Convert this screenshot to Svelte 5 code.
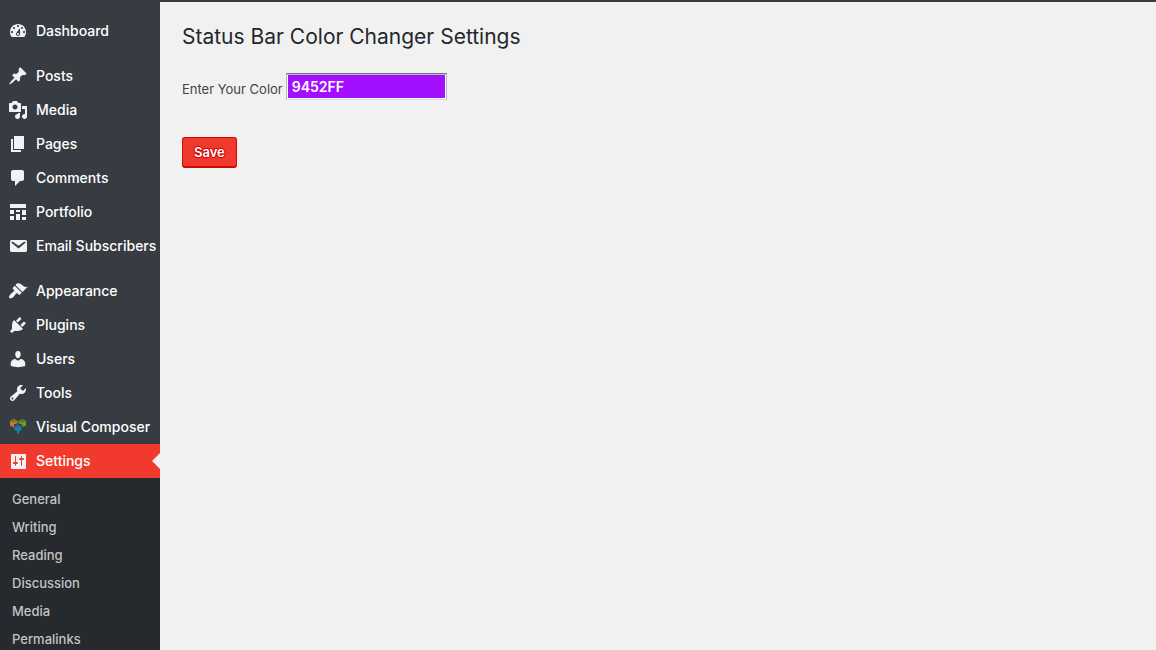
<script>
  const paths = {
    dashboard: 'M3.76 16h12.48c1.1-1.37 1.76-3.11 1.76-5 0-4.42-3.58-8-8-8s-8 3.58-8 8c0 1.89.66 3.63 1.76 5zM10 4c.55 0 1 .45 1 1s-.45 1-1 1-1-.45-1-1 .45-1 1-1zM6 6c.55 0 1 .45 1 1s-.45 1-1 1-1-.45-1-1 .45-1 1-1zm8 0c.55 0 1 .45 1 1s-.45 1-1 1-1-.45-1-1 .45-1 1-1zm-5.37 5.55L12 7v6c0 1.1-.9 2-2 2s-2-.9-2-2c0-.57.24-1.08.63-1.45zM4 10c.55 0 1 .45 1 1s-.45 1-1 1-1-.45-1-1 .45-1 1-1zm12 0c.55 0 1 .45 1 1s-.45 1-1 1-1-.45-1-1 .45-1 1-1zm-5 3c0-.55-.45-1-1-1s-1 .45-1 1 .45 1 1 1 1-.45 1-1z',
    posts: 'M10.44 3.02l1.82-1.82 6.36 6.35-1.83 1.82c-1.05-.68-2.48-.57-3.41.36l-.75.75c-.92.93-1.04 2.35-.35 3.41l-1.83 1.82-2.41-2.41-2.8 2.79c-.42.42-3.38 2.71-3.8 2.29s1.86-3.39 2.28-3.81l2.79-2.79L4.1 9.36l1.83-1.82c1.05.69 2.48.57 3.4-.36l.75-.75c.93-.92 1.05-2.35.36-3.41z',
    media: 'M13 11V4c0-.55-.45-1-1-1h-1.67L9 1H5L3.67 3H2c-.55 0-1 .45-1 1v7c0 .55.45 1 1 1h10c.55 0 1-.45 1-1zM7 4.5c1.38 0 2.5 1.12 2.5 2.5S8.38 9.5 7 9.5 4.5 8.38 4.5 7 5.62 4.5 7 4.5zM14 6h5v10.5c0 1.38-1.12 2.5-2.5 2.5S14 17.88 14 16.5s1.12-2.5 2.5-2.5c.17 0 .34.02.5.05V9h-3V6zm-4 8.05V13h2v3.5c0 1.38-1.12 2.5-2.5 2.5S7 17.88 7 16.5 8.12 14 9.5 14c.17 0 .34.02.5.05z',
    pages: 'M6 15V2h10v13H6zm-1 1h8v2H3V5h2v11z',
    comments: 'M5 2h9c1.1 0 2 .9 2 2v7c0 1.1-.9 2-2 2h-2l-5 5v-5H5c-1.1 0-2-.9-2-2V4c0-1.1.9-2 2-2z',
    portfolio: 'M2 2h16v4H2V2zm0 10V8h4v4H2zm6-2V8h4v2H8zm6 3V8h4v5h-4zm-6 5v-6h4v6H8zm-6 0v-4h4v4H2zm12 0v-3h4v3h-4z',
    email: 'M3.87 4h13.25C18.37 4 19 4.59 19 5.79v8.42c0 1.19-.63 1.79-1.88 1.79H3.87c-1.25 0-1.88-.6-1.88-1.79V5.79c0-1.2.63-1.79 1.88-1.79zm6.62 8.6l6.74-5.53c.24-.2.43-.66.13-1.07-.29-.41-.82-.42-1.17-.17l-5.7 3.86L4.8 5.83c-.35-.25-.88-.24-1.17.17-.3.41-.11.87.13 1.07z',
    appearance: 'M14.48 11.06L7.41 3.99l1.5-1.5c.5-.56 2.3-.47 3.51.32 1.21.8 1.43 1.28 2.91 2.1 1.18.64 2.45 1.26 4.45.85zm-.71.71L6.7 4.7 4.93 6.47c-.39.39-.39 1.02 0 1.41l1.06 1.06c.39.39.39 1.03 0 1.42-.6.6-1.43 1.11-2.21 1.69-.35.26-.7.53-1.01.84C1.43 14.23.4 16.08 1.4 17.07c.99 1 2.84-.03 4.18-1.36.31-.31.58-.66.85-1.02.57-.78 1.08-1.61 1.69-2.21.39-.39 1.02-.39 1.41 0l1.06 1.06c.39.39 1.02.39 1.41 0z',
    plugins: 'M13.11 4.36L9.87 7.6 8 5.73l3.24-3.24c.35-.34 1.05-.2 1.56.32.52.51.66 1.21.31 1.55zm-8 1.77l.91-1.12 9.01 9.01-1.19.84c-.71.71-2.63 1.16-3.82 1.16H6.14L4.9 17.26c-.59.59-1.54.59-2.12 0-.59-.58-.59-1.53 0-2.12l1.24-1.24v-3.88c0-1.13.4-3.19 1.09-3.89zm7.26 3.97l3.24-3.24c.34-.35 1.04-.21 1.55.31.52.51.66 1.21.31 1.55l-3.24 3.25z',
    users: 'M10 9.25c-2.27 0-2.73-3.44-2.73-3.44C7 4.02 7.82 2 9.97 2c2.16 0 2.98 2.02 2.71 3.81 0 0-.41 3.44-2.68 3.44zm0 2.57L12.72 10c2.39 0 4.52 2.33 4.52 4.53v2.49s-3.65 1.13-7.24 1.13c-3.65 0-7.24-1.13-7.24-1.13v-2.49c0-2.25 1.94-4.48 4.47-4.48z',
    tools: 'M16.68 9.77c-1.34 1.34-3.3 1.67-4.95.99l-5.41 6.52c-.99.99-2.59.99-3.58 0s-.99-2.59 0-3.57l6.52-5.42c-.68-1.65-.35-3.61.99-4.95 1.28-1.28 3.12-1.62 4.72-1.06l-2.89 2.89 2.82 2.82 2.86-2.87c.53 1.58.18 3.39-1.08 4.65zM3.81 16.21c.4.39 1.04.39 1.43 0 .4-.4.4-1.04 0-1.43-.39-.4-1.03-.4-1.43 0-.39.39-.39 1.03 0 1.43z',
    settings: 'M18 16V4c0-.55-.45-1-1-1H4c-.55 0-1 .45-1 1v13c0 .55.45 1 1 1h13c.55 0 1-.45 1-1zM8 11h1c.55 0 1 .45 1 1s-.45 1-1 1H8v1.5c0 .28-.22.5-.5.5s-.5-.22-.5-.5V13H6c-.55 0-1-.45-1-1s.45-1 1-1h1V5.5c0-.28.22-.5.5-.5s.5.22.5.5V11zm5-2h-1c-.55 0-1-.45-1-1s.45-1 1-1h1V5.5c0-.28.22-.5.5-.5s.5.22.5.5V7h1c.55 0 1 .45 1 1s-.45 1-1 1h-1v5.5c0 .28-.22.5-.5.5s-.5-.22-.5-.5V9z'
  };

  const groups = [
    [{ label: 'Dashboard', icon: 'dashboard' }],
    [
      { label: 'Posts', icon: 'posts' },
      { label: 'Media', icon: 'media' },
      { label: 'Pages', icon: 'pages' },
      { label: 'Comments', icon: 'comments' },
      { label: 'Portfolio', icon: 'portfolio' },
      { label: 'Email Subscribers', icon: 'email' }
    ],
    [
      { label: 'Appearance', icon: 'appearance' },
      { label: 'Plugins', icon: 'plugins' },
      { label: 'Users', icon: 'users' },
      { label: 'Tools', icon: 'tools' },
      { label: 'Visual Composer', icon: 'composer' },
      { label: 'Settings', icon: 'settings', current: true }
    ]
  ];

  const submenu = ['General', 'Writing', 'Reading', 'Discussion', 'Media', 'Permalinks'];

  let color = $state('9452FF');
</script>

<div class="admin">
  <nav class="sidebar" aria-label="Main menu">
    {#each groups as group}
      <ul class="group">
        {#each group as item}
          <li>
            <a class="item" class:current={item.current} href="#{item.icon}">
              <svg class="icon" viewBox="0 0 20 20" aria-hidden="true">
                {#if item.icon === 'composer'}
                  <path fill="#b98222" d="M2 4l4-2 3.500 2v2.200L6 7.500v3L2 8.500z" />
                  <path fill="#8f6a2a" d="M2 4l4-2 3.500 2L6 5.500z" />
                  <path fill="#6f9a1f" d="M10.500 4L14 2l4 2v4.500l-3.500 1.800V8l-4-1.800z" />
                  <path fill="#527a25" d="M10.500 4L14 2l4 2-4 1.500z" />
                  <path fill="#1c7fae" d="M6.500 9.500l3.500-2 3.500 2V13L11 14.500V17l-2-1v-2l-2.500-1z" />
                  <path fill="#1f6790" d="M6.500 9.500l3.500-2 3.500 2-3.500 1.700z" />
                {:else}
                  <path fill="currentColor" fill-rule="evenodd" d={paths[item.icon]} />
                {/if}
              </svg>
              <span>{item.label}</span>
            </a>
          </li>
        {/each}
      </ul>
    {/each}
    <ul class="submenu">
      {#each submenu as label}
        <li><a href="#{label}">{label}</a></li>
      {/each}
    </ul>
  </nav>

  <main class="content">
    <h1>Status Bar Color Changer Settings</h1>
    <form onsubmit={(e) => e.preventDefault()}>
      <div class="field">
        <label for="color">Enter Your Color</label>
        <input id="color" type="text" bind:value={color} />
      </div>
      <button type="submit">Save</button>
    </form>
  </main>
</div>

<style>
  :global(body) {
    margin: 0;
    background: #f1f1f1;
  }

  .admin {
    display: flex;
    height: 100vh;
    box-sizing: border-box;
    overflow: hidden;
    border-top: 2px solid #373b42;
    background: #f1f1f1;
    color: #444;
    font-family: Inter, 'Liberation Sans', sans-serif;
    font-size: 13px;
  }

  .sidebar {
    flex: 0 0 160px;
    padding-top: 12px;
    background: #373b42;
  }

  ul {
    margin: 0;
    padding: 0;
    list-style: none;
  }

  .group + .group {
    margin-top: 11px;
  }

  .item {
    position: relative;
    display: flex;
    align-items: center;
    gap: 8px;
    height: 34px;
    padding-left: 8px;
    color: #fff;
    font-size: 14px;
    font-weight: 500;
    line-height: 18px;
    text-decoration: none;
    white-space: nowrap;
  }

  .icon {
    flex: none;
    width: 20px;
    height: 20px;
    color: #f1f2f3;
  }

  .current {
    background: #f1392d;
  }

  .current::after {
    content: '';
    position: absolute;
    top: 9px;
    right: 0;
    border: 8px solid transparent;
    border-left-width: 0;
    border-right-color: #f1f1f1;
  }

  .submenu {
    padding: 7px 0;
    background: #26292d;
  }

  .submenu a {
    display: block;
    padding: 0 12px;
    color: #c3c4c5;
    font-weight: 500;
    line-height: 28px;
    text-decoration: none;
  }

  .content {
    flex: 1;
    padding: 20px 22px;
  }

  h1 {
    margin: 0;
    color: #23282d;
    font-size: 21px;
    font-weight: 400;
    line-height: 30px;
  }

  .field {
    display: flex;
    align-items: center;
    gap: 3px;
    margin: 21px 0 37px;
  }

  .field label {
    padding-top: 4px;
  }

  .field input {
    width: 161px;
    height: 27px;
    box-sizing: border-box;
    padding: 1px 5px;
    border: 1px solid #b8b8b8;
    border-top-color: #767676;
    border-bottom-color: #d8d8d8;
    border-radius: 0;
    background: #a30fff;
    box-shadow: inset 0 1px #bbb, inset 0 0 0 1px #fff;
    color: #fff;
    font: 600 14px Inter, 'Liberation Sans', sans-serif;
  }

  button {
    height: 31px;
    padding: 0 11px;
    border: 1px solid #c90c06;
    border-bottom-width: 2px;
    border-radius: 3px;
    background: #f1392d;
    color: #fff;
    font: 600 13px Inter, 'Liberation Sans', sans-serif;
    text-shadow: 0 -1px 1px #c00, 1px 0 1px #c00, 0 1px 1px #c00, -1px 0 1px #c00;
  }
</style>
